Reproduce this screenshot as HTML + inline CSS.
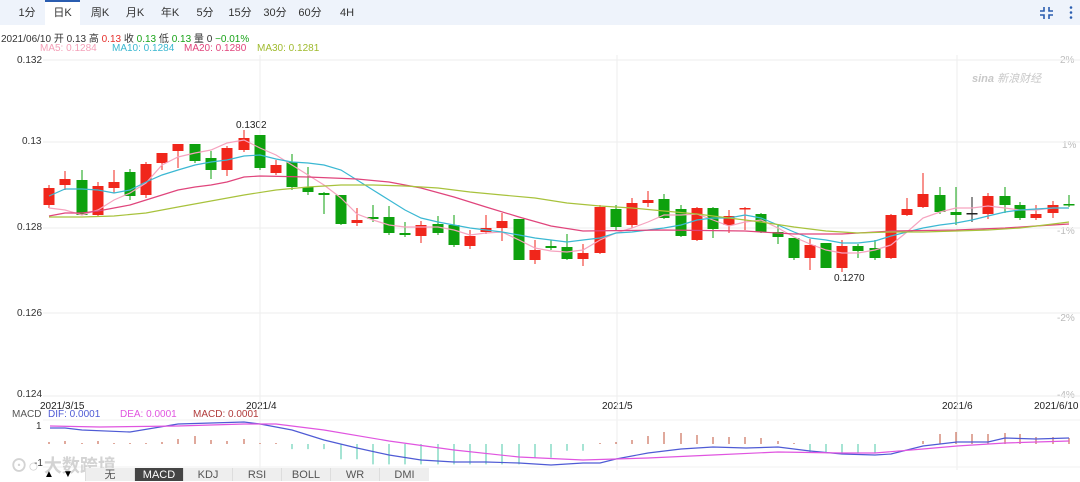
<!DOCTYPE html>
<html><head><meta charset="utf-8">
<style>
*{margin:0;padding:0;box-sizing:border-box}
body{width:1080px;height:481px;overflow:hidden;background:#fff;font-family:"Liberation Sans","Noto Sans CJK SC",sans-serif;position:relative}
.top{position:absolute;left:0;top:0;width:1080px;height:25px;background:#eef3fb}
.tab{position:absolute;top:0;height:25px;line-height:26px;font-size:11px;color:#333;text-align:center}
.tab.on{background:#fff;border-top:2px solid #2a5db0;line-height:22px}
.t{position:absolute;font-size:10px;white-space:nowrap}
.bt{position:absolute;top:468px;height:13px;font-size:11px;line-height:14px;text-align:center;color:#555;background:#eee;border-left:1px solid #ddd}
</style></head><body>
<div class="top"></div>
<div class="tab" style="left:12px;width:30px">1分</div>
<div class="tab on" style="left:45px;width:35px">日K</div>
<div class="tab" style="left:85px;width:30px">周K</div>
<div class="tab" style="left:120px;width:30px">月K</div>
<div class="tab" style="left:155px;width:30px">年K</div>
<div class="tab" style="left:190px;width:30px">5分</div>
<div class="tab" style="left:225px;width:30px">15分</div>
<div class="tab" style="left:260px;width:30px">30分</div>
<div class="tab" style="left:295px;width:30px">60分</div>
<div class="tab" style="left:332px;width:30px">4H</div>
<svg style="position:absolute;left:1040px;top:5px" width="40" height="16"><g stroke="#2a5db0" stroke-width="1.6" fill="none"><path d="M4 2v4H0M9 2v4h4M4 14v-4H0M9 14v-4h4"/></g><g fill="#2a5db0"><circle cx="31" cy="2.5" r="1.3"/><circle cx="31" cy="7.5" r="1.3"/><circle cx="31" cy="12.5" r="1.3"/></g></svg>
<div class="t" style="left:1px;top:30px;color:#333">2021/06/10 开 0.13 高 <span style="color:#e6302c">0.13</span> 收 <span style="color:#19a319">0.13</span> 低 <span style="color:#19a319">0.13</span> 量 0 <span style="color:#19a319">−0.01%</span></div>
<div class="t" style="left:40px;top:43px;color:#f4a0b8">MA5: 0.1284</div>
<div class="t" style="left:112px;top:43px;color:#3ab7d0">MA10: 0.1284</div>
<div class="t" style="left:184px;top:43px;color:#e0457c">MA20: 0.1280</div>
<div class="t" style="left:257px;top:43px;color:#9fba2e">MA30: 0.1281</div>
<div class="t" style="left:17px;top:55px;color:#333">0.132</div>
<div class="t" style="left:22px;top:136px;color:#333">0.13</div>
<div class="t" style="left:17px;top:222px;color:#333">0.128</div>
<div class="t" style="left:17px;top:308px;color:#333">0.126</div>
<div class="t" style="left:17px;top:389px;color:#333">0.124</div>
<div class="t" style="left:1060px;top:55px;color:#bbb">2%</div>
<div class="t" style="left:1062px;top:140px;color:#bbb">1%</div>
<div class="t" style="left:1057px;top:226px;color:#bbb">-1%</div>
<div class="t" style="left:1057px;top:313px;color:#bbb">-2%</div>
<div class="t" style="left:1057px;top:390px;color:#bbb">-4%</div>
<div class="t" style="left:972px;top:70px;color:#c8c8c8;font-size:11px;font-style:italic"><b>sina</b> 新浪财经</div>
<div class="t" style="left:236px;top:120px;color:#222">0.1302</div>
<div class="t" style="left:834px;top:273px;color:#222">0.1270</div>
<div class="t" style="left:40px;top:401px;color:#222">2021/3/15</div>
<div class="t" style="left:246px;top:401px;color:#222">2021/4</div>
<div class="t" style="left:602px;top:401px;color:#222">2021/5</div>
<div class="t" style="left:942px;top:401px;color:#222">2021/6</div>
<div class="t" style="left:1034px;top:401px;color:#222">2021/6/10</div>
<div class="t" style="left:12px;top:409px;color:#555">MACD</div>
<div class="t" style="left:48px;top:409px;color:#4f5bd5">DIF: 0.0001</div>
<div class="t" style="left:120px;top:409px;color:#e055e0">DEA: 0.0001</div>
<div class="t" style="left:193px;top:409px;color:#b03a3a">MACD: 0.0001</div>
<div class="t" style="left:36px;top:421px;color:#333">1</div>
<div class="t" style="left:34px;top:458px;color:#333">-1</div>
<svg id="c" style="position:absolute;left:0;top:0" width="1080" height="481"></svg>
<div class="t" style="left:10px;top:452px;color:rgba(200,200,200,.8);font-size:18px;font-weight:bold">⊙○ 大数跨境</div>
<div class="t" style="left:44px;top:469px;font-size:10px">▲</div>
<div class="t" style="left:63px;top:469px;font-size:10px">▼</div>
<div class="bt" style="left:85px;width:49px">无</div>
<div class="bt" style="left:134px;width:49px;background:#444;color:#fff">MACD</div>
<div class="bt" style="left:183px;width:49px">KDJ</div>
<div class="bt" style="left:232px;width:49px">RSI</div>
<div class="bt" style="left:281px;width:49px">BOLL</div>
<div class="bt" style="left:330px;width:49px">WR</div>
<div class="bt" style="left:379px;width:50px">DMI</div>
<script>
var s='';
[60,142,228,313,396].forEach(function(y){s+='<line x1="43" x2="1080" y1="'+y+'" y2="'+y+'" stroke="#eee"/>';});
[260,617,957].forEach(function(x){s+='<line x1="'+x+'" x2="'+x+'" y1="55" y2="470" stroke="#eee"/>';});
s+='<line x1="43" x2="1080" y1="420" y2="420" stroke="#f2f2f2"/><line x1="43" x2="1080" y1="467" y2="467" stroke="#f2f2f2"/>';
var C=[[49,'r',188,205,185,208],[65,'r',179,185,171,190],[82,'g',180,215,170,215],[98,'r',186,215,182,217],[114,'r',182,188,170,193],[130,'g',172,196,169,200],[146,'r',164,195,162,198],[162,'r',153,163,153,170],[178,'r',144,151,144,168],[195,'g',144,161,144,163],[211,'g',158,170,151,179],[227,'r',148,170,146,176],[244,'r',138,150,130,152],[260,'g',135,168,135,170],[276,'r',165,173,160,175],[292,'g',162,187,154,190],[308,'g',187,192,167,195],[324,'g',193,195,192,214],[341,'g',195,224,195,225],[357,'r',220,223,208,226],[373,'g',217,219,205,222],[389,'g',217,233,206,235],[405,'g',233,235,222,237],[421,'r',225,236,221,243],[438,'g',224,233,216,235],[454,'g',225,245,215,247],[470,'r',236,246,230,249],[486,'r',228,232,215,234],[502,'r',221,228,213,241],[519,'g',219,260,219,260],[535,'r',250,260,240,264],[551,'g',246,248,240,250],[567,'g',247,259,234,260],[583,'r',253,259,244,266],[600,'r',207,253,205,254],[616,'g',209,227,205,230],[632,'r',203,225,198,228],[648,'r',200,203,191,207],[664,'g',199,218,194,219],[681,'g',209,236,205,237],[697,'r',208,240,207,241],[713,'g',208,229,207,238],[729,'r',216,225,210,233],[745,'r',208,209,207,230],[761,'g',214,232,213,233],[778,'g',232,237,225,244],[794,'g',238,258,238,260],[810,'r',245,258,239,270],[826,'g',243,268,243,268],[842,'r',246,268,240,272],[858,'g',246,251,244,258],[875,'g',248,258,240,260],[891,'r',215,258,214,259],[907,'r',209,215,198,216],[923,'r',194,207,173,208],[940,'g',195,212,187,214],[956,'g',212,215,187,225],[972,'k',213,214,197,222],[988,'r',196,214,193,219],[1005,'g',196,205,187,213],[1020,'g',205,218,202,220],[1036,'r',214,218,205,220],[1053,'r',205,213,201,218],[1069,'g',204,205,195,207]];
var col={r:'#f0261b',g:'#0ea10e',k:'#222'};
C.forEach(function(c){var f=col[c[1]];s+='<line x1="'+c[0]+'" x2="'+c[0]+'" y1="'+c[4]+'" y2="'+c[5]+'" stroke="'+f+'"/>';s+='<rect x="'+(c[0]-5.5)+'" y="'+c[2]+'" width="11" height="'+Math.max(1.5,c[3]-c[2])+'" fill="'+f+'"/>';});
function pl(p,c){s+='<polyline fill="none" stroke="'+c+'" stroke-width="1.2" points="'+p+'"/>';}
pl('49,208 65,210 82,215 98,210 114,200 130,193 146,183 162,165 178,157 195,153 211,150 227,143 244,140 260,148 276,155 292,165 308,175 324,185 341,198 357,214 373,220 389,225 405,227 421,227 438,227 454,230 470,235 486,233 502,232 519,240 535,248 551,251 567,252 583,250 600,240 616,233 632,228 648,222 664,215 681,215 697,214 713,220 729,226 745,222 761,220 778,228 794,237 810,244 826,250 842,253 858,253 875,250 891,245 907,232 923,218 940,212 956,208 972,208 988,206 1005,208 1020,210 1036,210 1053,208 1069,208','#f6a3bf');
pl('49,196 65,189 82,189 98,190 114,193 130,190 146,182 162,175 178,170 195,165 211,162 227,160 244,156 260,155 276,159 292,162 308,163 324,165 341,170 357,180 373,190 389,200 405,210 421,218 438,222 454,225 470,228 486,230 502,232 519,235 535,238 551,240 567,242 583,240 600,238 616,233 632,232 648,230 664,228 681,225 697,220 713,218 729,218 745,215 761,218 778,225 794,232 810,238 826,240 842,243 858,243 875,241 891,236 907,232 923,228 940,225 956,223 972,220 988,216 1005,212 1020,210 1036,209 1053,208 1069,208','#3bb8d3');
pl('49,216 65,213 82,213 98,211 114,208 130,205 146,200 162,195 178,190 195,187 211,185 227,182 244,177 260,176 308,177 357,179 389,182 421,188 454,197 486,207 519,217 551,226 583,231 664,230 745,231 794,234 842,234 891,231 956,230 1005,228 1036,226 1069,224','#e0457c');
pl('49,217 82,217 114,216 146,213 178,207 211,201 244,195 276,190 308,187 341,185 373,185 405,186 438,188 470,192 502,195 535,198 567,203 600,206 632,208 664,211 697,214 729,218 761,222 794,227 826,231 858,233 891,232 923,232 956,231 988,230 1020,228 1053,224 1069,222','#a8c23c');
// MACD hist
var z=444;
C.forEach(function(c,i){var x=c[0],v;
if(x<280)v=[2,3,1,3,1,1,0,2,5,8,4,3,5,0][i]||1;else if(x<590)v=-(x<330?3:x<360?9:x<400?12:x<520?12:x<560?8:4);else if(x<800)v=[2,4,8,12,11,9,7,7,7,6,3,1,0][i-35]||1;else if(x<890)v=-5;else if(x<910)v=0;else v=[3,10,12,10,10,11,10,7,7,6,5][i-54]||5;
if(v>0)s+='<line x1="'+x+'" x2="'+x+'" y1="'+(z-v)+'" y2="'+z+'" stroke="#c0533a"/>';else if(v<0)s+='<line x1="'+x+'" x2="'+x+'" y1="'+z+'" y2="'+(z-v*1.7)+'" stroke="#4dc8a8"/>';});
pl('50,428 65,428 82,430 130,432 178,424 244,422 260,424 292,430 324,440 357,448 389,455 421,460 454,462 486,462 519,463 551,465 583,463 600,463 616,459 648,453 681,449 713,447 746,448 778,447 810,451 842,454 875,455 891,454 923,446 957,442 988,442 1005,438 1036,439 1069,438','#4f5bd5');
pl('50,426 100,427 178,426 244,424 276,424 324,430 389,441 454,450 519,457 583,460 648,458 713,455 778,452 842,453 875,453 923,449 957,446 1005,443 1069,441','#e055e0');
document.getElementById('c').innerHTML=s;
</script>
</body></html>
